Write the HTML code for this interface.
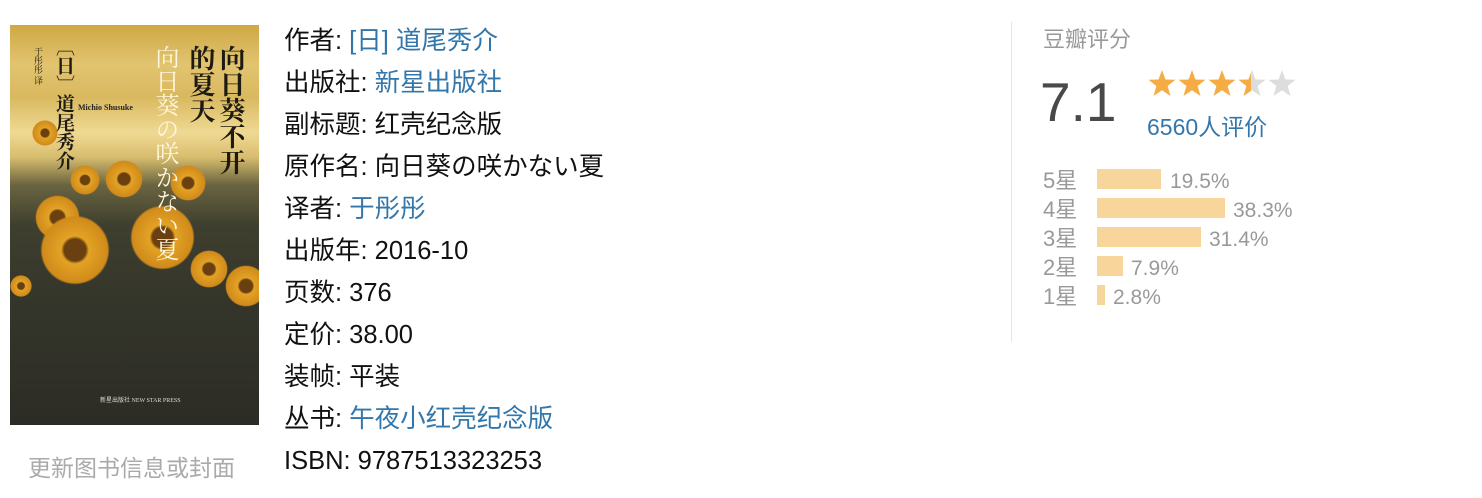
<!DOCTYPE html>
<html><head><meta charset="utf-8"><style>
body{margin:0;width:1482px;height:498px;background:#fff;position:relative;overflow:hidden;font-family:"Liberation Sans","Noto Sans CJK SC",sans-serif;}
.cover{position:absolute;left:10px;top:25px;width:249px;height:400px;overflow:hidden;
background:linear-gradient(180deg,#cfa845 0%,#e2c470 10%,#d9b95f 18%,#efd993 27%,#d8bd6e 33%,#6a6440 40%,#3e3f2e 50%,#34352a 70%,#2c2c26 100%);}
.sf{position:absolute;border-radius:50%;background:radial-gradient(circle,#6a4010 0 22%,#e3a325 28%,#d08a1a 66%,transparent 70%);}
.ct{position:absolute;font-family:"Noto Serif CJK SC",serif;font-weight:bold;color:#1d1a12;writing-mode:vertical-rl;}
.after{position:absolute;left:28px;top:449px;font-size:23px;color:#aaa;}
.info{position:absolute;left:284px;top:20px;font-size:25.5px;line-height:42px;color:#111;}
.info a{color:#37a;text-decoration:none;}
.div{position:absolute;left:1011px;top:22px;width:1px;height:320px;background:#e6e6e6;}
.r{position:absolute;font-size:22px;}
.bar{position:absolute;left:1097px;height:20px;background:#f8d59b;}
.lab{position:absolute;left:1043px;font-size:22px;color:#999;line-height:22px;}
.pct{position:absolute;font-size:21px;color:#999;line-height:22px;}
</style></head><body>
<div class="cover">
<div class="sf" style="left:22px;top:95px;width:26px;height:26px"></div>
<div class="sf" style="left:95px;top:135px;width:38px;height:38px"></div>
<div class="sf" style="left:60px;top:140px;width:30px;height:30px"></div>
<div class="sf" style="left:25px;top:170px;width:45px;height:45px"></div>
<div class="sf" style="left:30px;top:190px;width:70px;height:70px"></div>
<div class="sf" style="left:120px;top:180px;width:65px;height:65px"></div>
<div class="sf" style="left:160px;top:140px;width:36px;height:36px"></div>
<div class="sf" style="left:180px;top:225px;width:38px;height:38px"></div>
<div class="sf" style="left:215px;top:240px;width:42px;height:42px"></div>
<div class="sf" style="left:0px;top:250px;width:22px;height:22px"></div>
<div class="ct" style="right:12px;top:20px;font-size:26px;line-height:30px">向日葵不开<br>的夏天</div>
<div class="ct" style="left:140px;top:20px;font-size:24px;color:#fff6dc;font-weight:normal">向日葵の咲かない夏</div>
<div class="ct" style="left:42px;top:12px;font-size:19px">〔日〕道尾秀介</div>
<div class="ct" style="left:22px;top:22px;font-size:9px;font-weight:normal">于彤彤 译</div>
<div style="position:absolute;left:68px;top:78px;font-size:8px;color:#222;font-family:'Liberation Serif',serif;font-weight:bold">Michio Shusuke</div>
<div style="position:absolute;left:90px;top:370px;font-size:6px;color:#ddd;font-family:'Liberation Serif',serif">新星出版社 NEW STAR PRESS</div>
</div>
<div class="after">更新图书信息或封面</div>
<div class="info">
作者: <a>[日] 道尾秀介</a><br>
出版社: <a>新星出版社</a><br>
副标题: 红壳纪念版<br>
原作名: 向日葵の咲かない夏<br>
译者: <a>于彤彤</a><br>
出版年: 2016-10<br>
页数: 376<br>
定价: 38.00<br>
装帧: 平装<br>
丛书: <a>午夜小红壳纪念版</a><br>
ISBN: 9787513323253
</div>
<div class="div"></div>
<div class="r" style="left:1043px;top:22px;color:#999">豆瓣评分</div>
<div class="r" style="left:1040px;top:71px;font-size:55px;color:#494949;line-height:62px">7.1</div>
<svg style="position:absolute;left:1147px;top:69px" width="150" height="30" viewBox="0 0 150 30">
<defs><clipPath id="h"><rect x="0" y="0" width="14" height="30"/></clipPath>
<path id="s" d="M15 1 L18.5 10.5 L28.5 10.8 L20.6 17 L23.5 27 L15 21.2 L6.5 27 L9.4 17 L1.5 10.8 L11.5 10.5 Z"/></defs>
<use href="#s" fill="#f5ac45"/><use href="#s" x="30" fill="#f5ac45"/><use href="#s" x="60" fill="#f5ac45"/>
<use href="#s" x="90" fill="#ddd"/><g transform="translate(90,0)"><use href="#s" fill="#f5ac45" clip-path="url(#h)"/></g>
<use href="#s" x="120" fill="#ddd"/></svg>
<div class="r" style="left:1147px;top:108px;color:#37a;font-size:23px">6560人评价</div>
<div class="lab" style="top:170px">5星</div><div class="bar" style="top:169px;width:64px"></div><div class="pct" style="left:1170px;top:171px">19.5%</div>
<div class="lab" style="top:199px">4星</div><div class="bar" style="top:198px;width:128px"></div><div class="pct" style="left:1233px;top:200px">38.3%</div>
<div class="lab" style="top:228px">3星</div><div class="bar" style="top:227px;width:104px"></div><div class="pct" style="left:1209px;top:229px">31.4%</div>
<div class="lab" style="top:257px">2星</div><div class="bar" style="top:256px;width:26px"></div><div class="pct" style="left:1131px;top:258px">7.9%</div>
<div class="lab" style="top:286px">1星</div><div class="bar" style="top:285px;width:8px"></div><div class="pct" style="left:1113px;top:287px">2.8%</div>
</body></html>
